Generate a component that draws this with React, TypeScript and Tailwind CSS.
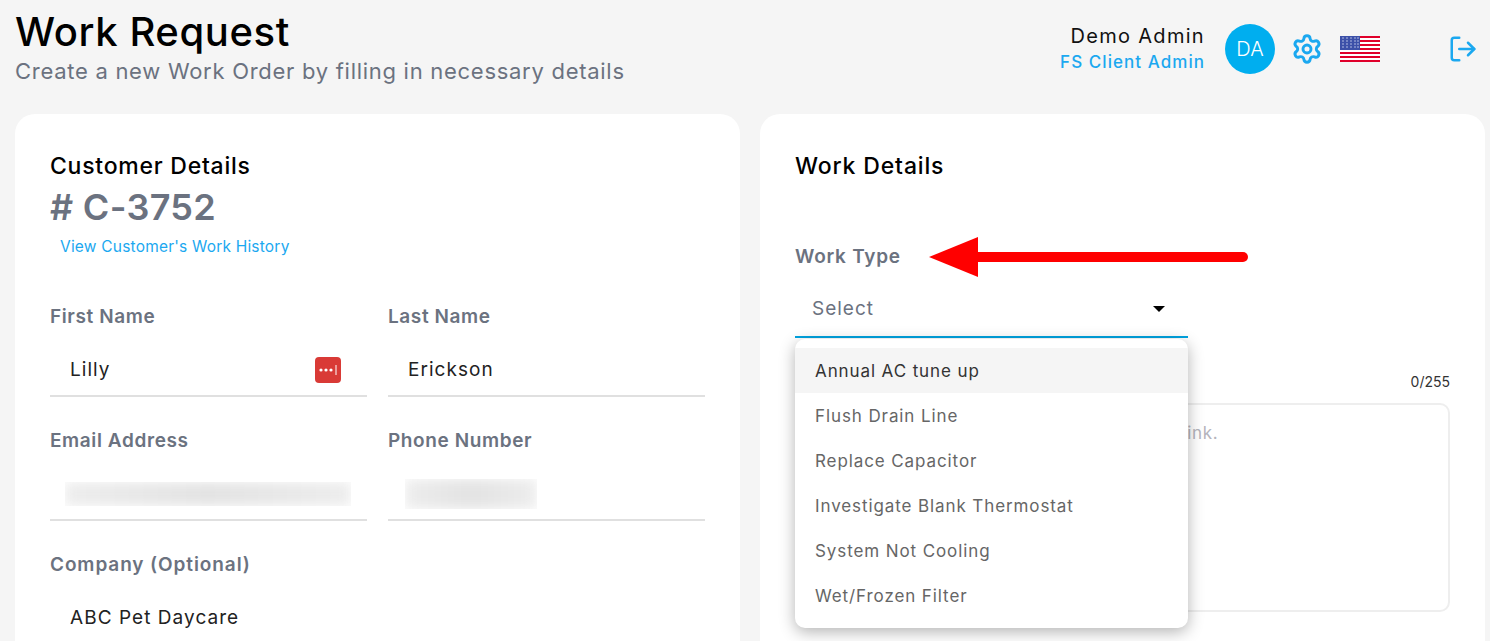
import { Settings, LogOut } from "lucide-react"

const workTypes = [
  "Annual AC tune up",
  "Flush Drain Line",
  "Replace Capacitor",
  "Investigate Blank Thermostat",
  "System Not Cooling",
  "Wet/Frozen Filter",
]

function UsFlag() {
  const stripes = [0, 2, 4, 6, 8, 10, 12]
  return (
    <svg width="40" height="26" viewBox="0 0 40 26" className="block">
      <rect width="40" height="26" fill="#fff" />
      {stripes.map((i) => (
        <rect key={i} y={i * 2} width="40" height="2" fill="#e0002b" />
      ))}
      <rect width="20" height="14" fill="#3c50a8" />
      {[2, 5, 8, 11].map((y) =>
        [3, 7, 11, 15, 18].map((x) => <rect key={`${x}-${y}`} x={x - 0.6} y={y - 0.6} width="1.2" height="1.2" fill="#dbe1f5" />)
      )}
    </svg>
  )
}

function LastPassIcon() {
  return (
    <span className="absolute right-[26px] top-[20px] flex h-[26px] w-[26px] items-center justify-center rounded-[4px] bg-[#d93a36]">
      <svg width="20" height="10" viewBox="0 0 20 10">
        <circle cx="3" cy="5" r="1.6" fill="#fff" />
        <circle cx="8" cy="5" r="1.6" fill="#fff" />
        <circle cx="13" cy="5" r="1.6" fill="#fff" />
        <rect x="17.5" y="0" width="1" height="10" fill="#fff" />
      </svg>
    </span>
  )
}

function Field({ label, value, children }: { label: string; value?: string; children?: React.ReactNode }) {
  return (
    <div>
      <div className="text-[19px] leading-6 font-semibold text-[#6b7280] tracking-[0.6px]">{label}</div>
      <div className="relative mt-[8px] h-[60px] border-b-2 border-[#e0e0e0] pl-5 pt-[21px] text-[19px] leading-6 text-[#222] tracking-[1.05px]">
        {value}
        {children}
      </div>
    </div>
  )
}

function Blurred({ width, height, left, top }: { width: number; height: number; left: number; top: number }) {
  return (
    <div className="absolute overflow-hidden" style={{ width, height, left, top }}>
      <div className="h-full w-full bg-linear-to-r from-[#ededed] via-[#e3e3e3] to-[#ededed] blur-[6px]" />
    </div>
  )
}

export default function App() {
  return (
    <div
      className="h-[641px] w-[1490px] overflow-hidden bg-[#f5f5f5] pr-[5px] pl-[15px]"
      style={{ fontFamily: "Inter, 'Liberation Sans', sans-serif" }}
    >
      <header className="flex h-[114px] items-start justify-between">
        <div className="pt-[9px]">
          <h1 className="text-[40px] leading-[46px] font-medium text-black tracking-[0.6px]">Work Request</h1>
          <p className="mt-[1px] text-[22px] leading-[30px] text-[#6b7280] tracking-[0.72px]">
            Create a new Work Order by filling in necessary details
          </p>
        </div>
        <div className="flex items-center pt-[24px] pr-[7px]">
          <div className="text-right">
            <div className="text-[20px] leading-6 text-[#111] tracking-[1.3px]">Demo Admin</div>
            <div className="mt-[2px] text-[17px] leading-6 font-medium text-[#1ba8f0] tracking-[1.05px]">FS Client Admin</div>
          </div>
          <div className="ml-5 flex h-[50px] w-[50px] items-center justify-center rounded-full bg-[#00aeef] text-[20px] font-light text-white">
            DA
          </div>
          <Settings className="ml-[16px] h-[32px] w-[32px] text-[#1ba8f0]" strokeWidth={2.2} />
          <div className="ml-[17px]">
            <UsFlag />
          </div>
          <LogOut className="ml-[68px] h-[30px] w-[30px] text-[#1ba8f0]" strokeWidth={2} />
        </div>
      </header>

      <main className="grid grid-cols-2 gap-5">
        <section className="h-[600px] rounded-[20px] bg-white px-[35px] pt-[38px]">
          <h2 className="text-[23px] leading-7 font-medium text-black tracking-[0.75px]">Customer Details</h2>
          <div className="mt-[5px] text-[36px] leading-[44px] font-semibold text-[#6b7280] tracking-[0.3px]">
            # C-3752
          </div>
          <a className="mt-[6px] ml-[10px] block text-[15.5px] leading-6 text-[#1ba8f0] tracking-[0.2px]">
            View Customer's Work History
          </a>
          <div className="mt-[46px] grid grid-cols-[317px_317px] gap-x-[21px] gap-y-[32px]">
            <Field label="First Name" value="Lilly">
              <LastPassIcon />
            </Field>
            <Field label="Last Name" value="Erickson" />
            <Field label="Email Address">
              <Blurred width={286} height={24} left={15} top={21} />
            </Field>
            <Field label="Phone Number">
              <Blurred width={132} height={30} left={17} top={18} />
            </Field>
            <div className="col-span-2">
              <div className="text-[19px] leading-6 font-semibold text-[#6b7280] tracking-[0.9px]">Company (Optional)</div>
              <div className="mt-[8px] pl-5 pt-[21px] text-[19px] leading-6 text-[#222] tracking-[1.05px]">ABC Pet Daycare</div>
            </div>
          </div>
        </section>

        <section className="relative h-[600px] rounded-[20px] bg-white px-[35px] pt-[38px]">
          <h2 className="text-[23px] leading-7 font-medium text-black tracking-[0.85px]">Work Details</h2>

          <div className="mt-[65px] text-[19px] leading-6 font-semibold text-[#6b7280] tracking-[0.75px]">Work Type</div>

          <div className="relative mt-[8px] flex h-[61px] w-[393px] items-center justify-between border-b-2 border-[#00a3e0] pt-[5px] pr-[23px] pl-[17px]">
            <span className="text-[19px] text-[#6b7280] tracking-[1px]">Select</span>
            <span className="h-0 w-0 border-x-[6px] border-t-[6px] border-x-transparent border-t-black" />
          </div>

          <div className="mt-[34px] text-right text-[14px] leading-5 text-[#333]">0/255</div>
          <div className="mt-[11px] h-[209px] rounded-[10px] border-2 border-[#eeeeee] pt-[16px] pl-[20px] text-[17px] leading-6 text-[#b4b4bc] tracking-[0.72px]">
            Describe the problem and whatever you think.
          </div>

          <ul className="absolute top-[225px] left-[35px] z-10 w-[393px] rounded-[10px] bg-white pt-[9px] pb-[10px] shadow-[0_4px_16px_rgba(0,0,0,0.3)]">
            {workTypes.map((t, i) => (
              <li
                key={t}
                className={`flex h-[45px] items-center px-5 pt-[3px] text-[17px] tracking-[0.9px] ${
                  i === 0 ? "bg-[#f5f5f5] text-[#333]" : "text-[#666]"
                }`}
              >
                {t}
              </li>
            ))}
          </ul>

          {/* annotation arrow */}
          <svg className="absolute top-[122px] left-[168px]" width="322" height="44" viewBox="0 0 322 44">
            <path d="M1 21 L50 1 V41 Z" fill="#ff0000" />
            <path d="M48 21 H315" stroke="#ff0000" strokeWidth="10" strokeLinecap="round" />
          </svg>
        </section>
      </main>
    </div>
  )
}
